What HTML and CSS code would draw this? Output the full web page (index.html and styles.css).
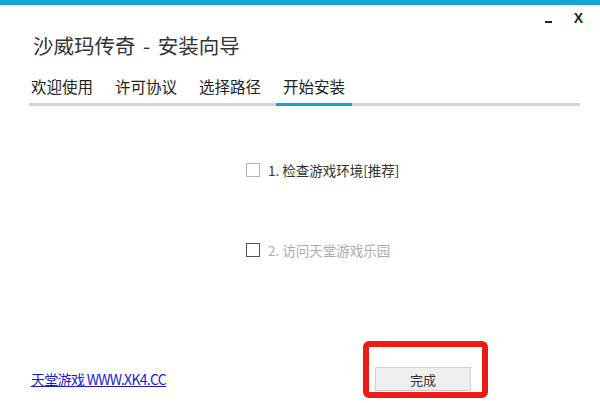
FILE: index.html
```html
<!DOCTYPE html>
<html lang="zh-CN">
<head>
    <meta charset="UTF-8">
    <title>沙威玛传奇 - 安装向导</title>
    <link rel="stylesheet" href="styles.css">
</head>
<body>
    <div class="window">
        <div class="topbar"></div>
        <div class="controls">
            <span class="min"></span>
            <span class="close">X</span>
        </div>
        <h1 class="title">沙威玛传奇 - 安装向导</h1>
        <div class="tabs">
            <div class="tab">欢迎使用</div>
            <div class="tab">许可协议</div>
            <div class="tab">选择路径</div>
            <div class="tab active">开始安装</div>
        </div>
        <div class="options">
            <label class="option">
                <span class="box"></span>
                <span>1. 检查游戏环境[推荐]</span>
            </label>
            <label class="option disabled">
                <span class="box"></span>
                <span>2. 访问天堂游戏乐园</span>
            </label>
        </div>
        <div class="footer">
            <a class="link" href="#">天堂游戏 WWW.XK4.CC</a>
            <button class="btn">完成</button>
        </div>
        <div class="mark"></div>
    </div>
</body>
</html>
```

FILE: styles.css
```css
body {
    margin: 0;
    background-color: #fff;
    font-family: "Noto Sans CJK SC", "Noto Sans", sans-serif;
    color: #333;
}

.window {
    position: relative;
    width: 600px;
    height: 403px;
    overflow: hidden;
    background-color: #fff;
}

.topbar {
    height: 5px;
    background-color: #12a4d8;
}

.controls {
    display: flex;
    justify-content: flex-end;
    align-items: center;
    gap: 22px;
    height: 26px;
    padding-right: 17px;
}

.min {
    width: 7px;
    height: 2px;
    margin-top: 7px;
    background-color: #222;
}

.close {
    font-family: "Liberation Sans", sans-serif;
    font-size: 14px;
    font-weight: bold;
    color: #222;
}

.title {
    margin: 0 0 0 33px;
    font-size: 20.5px;
    font-weight: normal;
    line-height: 28px;
    color: #333;
    word-spacing: 3px;
}

.tabs {
    display: flex;
    gap: 8px;
    margin: 17px 20px 0 29px;
    border-bottom: 3px solid #d4d4d4;
}

.tab {
    padding: 0 7px 7px;
    margin-bottom: -3px;
    border-bottom: 3px solid transparent;
    font-size: 15.5px;
    line-height: 20px;
    color: #222;
}

.tab:first-child {
    padding-left: 2px;
}

.tab.active {
    border-bottom-color: #15a1d4;
}

.options {
    display: flex;
    flex-direction: column;
    gap: 60px;
    margin-top: 54px;
    padding-left: 246px;
}

.option {
    display: flex;
    align-items: center;
    gap: 8px;
    height: 20px;
    font-size: 13.5px;
    color: #333;
}

.box {
    width: 12px;
    height: 12px;
    border: 1px solid #b4b4b4;
    background-color: #fff;
}

.option.disabled {
    color: #ababab;
}

.option.disabled .box {
    border-color: #555;
}

.footer {
    display: flex;
    justify-content: space-between;
    align-items: center;
    margin-top: 107px;
    padding: 0 129px 0 31px;
}

.link {
    font-size: 14px;
    letter-spacing: -0.7px;
    color: #1b1bd0;
    text-decoration: underline;
}

.btn {
    width: 96px;
    height: 24px;
    border: 1px solid #cfcfcf;
    background-color: #efefef;
    font-family: "Noto Sans CJK SC", sans-serif;
    font-size: 13px;
    color: #333;
}

.mark {
    position: absolute;
    left: 363px;
    top: 341px;
    width: 113px;
    height: 45px;
    border: 6px solid #ec1c14;
    border-radius: 6px;
}
```
